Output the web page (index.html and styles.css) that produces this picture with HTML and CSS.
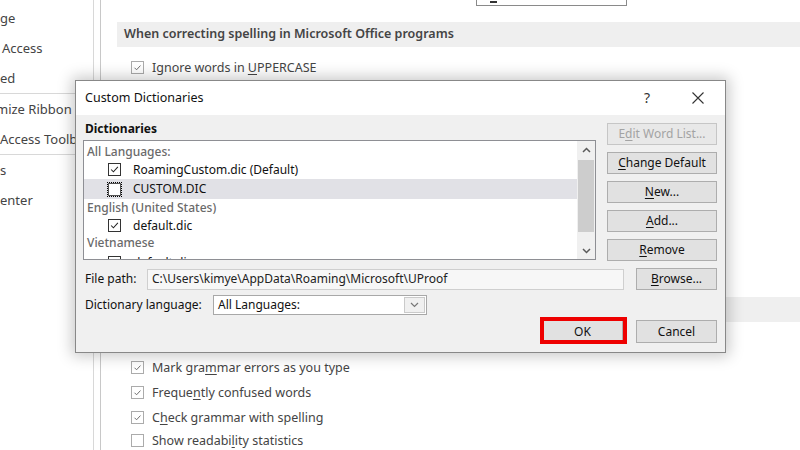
FILE: index.html
```html
<!DOCTYPE html>
<html>
<head>
<meta charset="utf-8">
<link rel="stylesheet" href="styles.css">
</head>
<body>
<div class="app">
  <nav class="sidebar">
    <div class="nav-item">ge</div>
    <div class="nav-item pad2">Access</div>
    <div class="nav-item">ed</div>
    <div class="nav-sep"></div>
    <div class="nav-item"><span class="cut4">mize Ribbon</span></div>
    <div class="nav-item">Access Toolbar</div>
    <div class="nav-sep"></div>
    <div class="nav-item">s</div>
    <div class="nav-item">enter</div>
  </nav>
  <div class="gutter"></div>
  <main class="main">
    <div class="toprow"><div class="topbox"><span class="topglyph"></span></div></div>
    <div class="section-head">When correcting spelling in Microsoft Office programs</div>
    <div class="opts first">
      <div class="opt"><span class="cb"><svg viewBox="0 0 13 13"><path d="M3 6.8 L5.4 9.2 L10 4.2"/></svg></span><span>Ignore words in <u>U</u>PPERCASE</span></div>
      <div class="opt covered"><span class="cb"></span><span>Ignore words that contain numbers</span></div>
      <div class="opt covered"><span class="cb"></span><span>Ignore Internet and file addresses</span></div>
      <div class="opt covered"><span class="cb"></span><span>Flag repeated words</span></div>
      <div class="opt covered"><span class="cb"></span><span>Enforce accented uppercase in French</span></div>
      <div class="opt covered"><span class="cb"></span><span>Suggest from main dictionary only</span></div>
      <div class="opt covered"><span class="cb"></span><span>Custom Dictionaries...</span></div>
      <div class="opt covered"><span class="cb"></span><span>French modes</span></div>
      <div class="opt covered"><span class="cb"></span><span>Spanish modes</span></div>
    </div>
    <div class="section-head second"><span class="covered">When correcting spelling and grammar in Word</span></div>
    <div class="opts">
      <div class="opt covered"><span class="cb"></span><span>Check spelling as you type</span></div>
      <div class="opt"><span class="cb"><svg viewBox="0 0 13 13"><path d="M3 6.8 L5.4 9.2 L10 4.2"/></svg></span><span>Mark gra<u>m</u>mar errors as you type</span></div>
      <div class="opt"><span class="cb"><svg viewBox="0 0 13 13"><path d="M3 6.8 L5.4 9.2 L10 4.2"/></svg></span><span>Freque<u>n</u>tly confused words</span></div>
      <div class="opt"><span class="cb"><svg viewBox="0 0 13 13"><path d="M3 6.8 L5.4 9.2 L10 4.2"/></svg></span><span>C<u>h</u>eck grammar with spelling</span></div>
      <div class="opt last"><span class="cb"></span><span>Show readabi<u>l</u>ity statistics</span></div>
    </div>
  </main>
</div>

<div class="dialog">
  <div class="dlg-title">
    <span class="dlg-name">Custom Dictionaries</span>
    <span class="dlg-help">?</span>
    <span class="dlg-close"><svg viewBox="0 0 12 12"><path d="M0.5 0.5 L11.5 11.5 M11.5 0.5 L0.5 11.5"/></svg></span>
  </div>
  <div class="dlg-body">
    <div class="dlg-top">
      <div class="dlg-left">
        <div class="dlg-label">Dictionaries</div>
        <div class="listbox">
          <div class="list-items">
            <div class="grp top">All Languages:</div>
            <div class="item h19"><span class="lcb"><svg viewBox="0 0 13 13"><path d="M2.5 6.5 L5.2 9.2 L10.5 3.5"/></svg></span><span>RoamingCustom.dic (Default)</span></div>
            <div class="item sel h20"><span class="lcb focus"></span><span>CUSTOM.DIC</span></div>
            <div class="grp">English (United States)</div>
            <div class="item h17"><span class="lcb"><svg viewBox="0 0 13 13"><path d="M2.5 6.5 L5.2 9.2 L10.5 3.5"/></svg></span><span>default.dic</span></div>
            <div class="grp h19">Vietnamese</div>
            <div class="item h19"><span class="lcb"><svg viewBox="0 0 13 13"><path d="M2.5 6.5 L5.2 9.2 L10.5 3.5"/></svg></span><span>default.dic</span></div>
          </div>
          <div class="scroll">
            <div class="arrow"><svg viewBox="0 0 9 6"><path d="M1 5 L4.5 1.5 L8 5"/></svg></div>
            <div class="track"><div class="thumb"></div></div>
            <div class="arrow"><svg viewBox="0 0 9 6"><path d="M1 1 L4.5 4.5 L8 1"/></svg></div>
          </div>
        </div>
      </div>
      <div class="dlg-right">
        <div class="btn disabled">E<u>d</u>it Word List...</div>
        <div class="btn"><u>C</u>hange Default</div>
        <div class="btn"><u>N</u>ew...</div>
        <div class="btn"><u>A</u>dd...</div>
        <div class="btn"><u>R</u>emove</div>
      </div>
    </div>
    <div class="path-row">
      <span class="path-label">File path:</span>
      <div class="path-box">C:\Users\kimye\AppData\Roaming\Microsoft\UProof</div>
      <div class="btn browse"><u>B</u>rowse...</div>
    </div>
    <div class="lang-row">
      <span class="lang-label">Dictionary language:</span>
      <div class="combo">
        <span class="combo-text">All Languages:</span>
        <span class="combo-arrow"><svg viewBox="0 0 9 6"><path d="M1 1 L4.5 4.5 L8 1"/></svg></span>
      </div>
    </div>
    <div class="btn-row">
      <div class="ok-wrap"><div class="btn ok">OK</div><div class="annot"></div></div>
      <div class="btn cancel">Cancel</div>
    </div>
  </div>
</div>
</body>
</html>
```

FILE: styles.css
```css
* { box-sizing: border-box; }
body {
  margin: 0;
  width: 800px;
  height: 450px;
  overflow: hidden;
  background: #fff;
  font-family: "Noto Sans", "Open Sans", sans-serif;
  position: relative;
}
.app { display: flex; height: 450px; }

.sidebar {
  width: 94px;
  border-right: 1px solid #d8d8d8;
  padding-top: 3px;
  color: #444;
  font-size: 13px;
  overflow: hidden;
}
.nav-item { height: 30px; line-height: 30px; white-space: nowrap; overflow: hidden; }
.pad2 { padding-left: 2px; }
.cut4 { margin-left: -4px; }
.nav-sep { height: 1px; background: #d8d8d8; }
.gutter { width: 6px; }

.main {
  flex: 1;
  border-left: 1px solid #c8c8c8;
  padding-left: 16px;
  color: #444;
  font-size: 12.5px;
  overflow: hidden;
}
.covered { visibility: hidden; }
.toprow { height: 6px; display: flex; }
.topbox {
  margin-left: 359px;
  width: 151px;
  height: 6px;
  border: 1px solid #8a8a8a;
  border-top: none;
}
.topglyph { display: block; margin: 1px 0 0 13px; width: 7px; height: 2px; background: #333; }

.section-head {
  margin-top: 16px;
  height: 25px;
  line-height: 24px;
  background: #efefef;
  font-weight: 600;
  padding-left: 7px;
  color: #444;
  white-space: nowrap;
}
.section-head.second { margin-top: 17px; margin-bottom: 8px; }
.opts.first { margin-top: 8px; }
.opt {
  height: 25px;
  line-height: 18px;
  display: flex;
  align-items: center;
  gap: 8px;
  padding-left: 14px;
  white-space: nowrap;
}
.opt.last { height: 21px; }
.opt u { text-decoration-thickness: 1px; text-underline-offset: 2px; }
.cb {
  width: 13px;
  height: 13px;
  border: 1px solid #ababab;
  background: #fff;
  display: flex;
  flex: none;
}
.cb svg { width: 11px; height: 11px; }
.cb path { fill: none; stroke: #666; stroke-width: 1.1; }

/* Dialog */
.dialog {
  position: absolute;
  left: 75px;
  top: 80px;
  width: 651px;
  height: 273px;
  border: 1px solid #888;
  background: #f0f0f0;
  box-shadow: 0 0 14px 3px rgba(0,0,0,0.22);
  font-size: 12px;
  line-height: 16px;
  color: #000;
}
.dlg-title {
  height: 34px;
  background: #fff;
  display: flex;
  align-items: center;
  padding-left: 9px;
  padding-right: 4px;
}
.dlg-name { font-size: 12.5px; color: #111; }
.dlg-help { margin-left: auto; width: 30px; text-align: center; font-size: 14px; color: #333; }
.dlg-close { width: 46px; margin-left: 13px; display: flex; justify-content: center; }
.dlg-close svg { width: 12px; height: 12px; }
.dlg-close path { stroke: #333; stroke-width: 1.1; fill: none; }

.dlg-body { padding: 5px 8px 0 7px; }
.dlg-top { display: flex; gap: 11px; }
.dlg-left { flex: 1; min-width: 0; }
.dlg-label { height: 18px; line-height: 18px; font-weight: 700; color: #111; padding-left: 2px; }
.listbox {
  margin-top: 2px;
  height: 120px;
  border: 1px solid #8e8f94;
  background: #fff;
  display: flex;
  overflow: hidden;
}
.list-items { flex: 1; overflow: hidden; }
.grp { height: 18px; line-height: 18px; padding-left: 3px; color: #6a6a6a; font-weight: 500; white-space: nowrap; }
.grp.top { padding-top: 2px; height: 19px; line-height: 17px; }
.item {
  height: 18px;
  display: flex;
  align-items: center;
  gap: 12px;
  padding-left: 24px;
  white-space: nowrap;
  color: #111;
}
.h17 { height: 17px; }
.h19 { height: 19px; }
.h20 { height: 20px; }
.item.sel { background: #e1e1e6; height: 20px; }
.lcb {
  width: 13px;
  height: 13px;
  border: 1px solid #333;
  background: #fff;
  display: flex;
  flex: none;
}
.lcb svg { width: 11px; height: 11px; }
.lcb path { fill: none; stroke: #222; stroke-width: 1.2; }
.lcb.focus { outline: 1px dotted #000; outline-offset: 0; border-color: #555; }

.scroll {
  width: 18px;
  background: #f0f0f0;
  display: flex;
  flex-direction: column;
  flex: none;
}
.arrow { height: 17px; display: flex; align-items: center; justify-content: center; }
.arrow svg { width: 9px; height: 6px; }
.arrow path { fill: none; stroke: #5a5a5a; stroke-width: 1.5; }
.track { flex: 1; padding: 2px 1px 0 1px; }
.thumb { height: 72px; background: #cdcdcd; }

.dlg-right { width: 110px; padding-top: 3px; display: flex; flex-direction: column; gap: 7px; }
.btn {
  height: 22px;
  border: 1px solid #adadad;
  background: #e1e1e1;
  display: flex;
  align-items: center;
  justify-content: center;
  color: #111;
  white-space: nowrap;
}
.btn u { text-underline-offset: 2px; }
.btn.disabled { color: #a3a3a3; border-color: #c6c6c6; background: #e8e8e8; }

.path-row { display: flex; align-items: center; height: 24px; margin-top: 6px; }
.path-label { width: 64px; flex: none; padding-left: 2px; color: #111; }
.path-box {
  flex: 1;
  height: 21px;
  margin-right: 12px;
  border: 1px solid #cfcfcf;
  background: #f7f7f7;
  display: flex;
  align-items: center;
  padding-left: 4px;
  color: #222;
  white-space: nowrap;
  overflow: hidden;
}
.btn.browse { width: 81px; flex: none; }

.lang-row { display: flex; align-items: center; height: 20px; margin-top: 4px; }
.lang-label { width: 130px; flex: none; padding-left: 2px; color: #111; white-space: nowrap; }
.combo {
  width: 214px;
  height: 20px;
  border: 1px solid #a8a8a8;
  background: #fff;
  display: flex;
  align-items: center;
}
.combo-text { flex: 1; padding-left: 4px; color: #111; white-space: nowrap; }
.combo-arrow {
  width: 21px;
  height: 16px;
  margin-right: 1px;
  border: 1px solid #cacaca;
  background: #f0f0f0;
  display: flex;
  align-items: center;
  justify-content: center;
}
.combo-arrow svg { width: 9px; height: 6px; }
.combo-arrow path { fill: none; stroke: #777; stroke-width: 1.2; }

.btn-row { display: flex; justify-content: flex-end; gap: 13px; margin-top: 5px; }
.btn-row .btn { width: 81px; height: 23px; }
.ok-wrap { position: relative; }
.annot {
  position: absolute;
  top: -3px;
  left: -2px;
  right: -4px;
  bottom: -1px;
  border: 4px solid #ee0000;
}
```
